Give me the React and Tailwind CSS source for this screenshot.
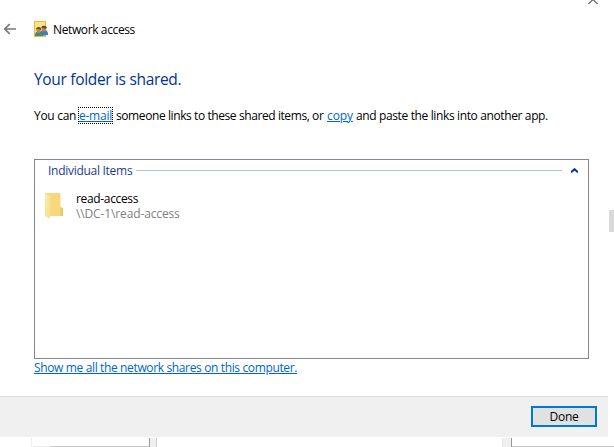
function BackArrow() {
  return (
    <svg className="ml-1 h-3 w-3" viewBox="0 0 12 12" fill="none" stroke="#777" strokeWidth="1.7">
      <path d="M0.8 6H12M5.8 1L0.8 6L5.8 11" />
    </svg>
  );
}

function SharedFolderIcon() {
  return (
    <svg className="ml-[18px] h-4 w-[14px]" viewBox="0 0 14 16">
      <path d="M0 0H12V16H0Z" fill="#e9bd45" />
      <path d="M1 1H11V15H1Z" fill="#ffe37d" />
      <path d="M6 15V12Q7 9 10 9Q14 9 14 13V14Z" fill="#3c7fb5" />
      <path d="M7.5 6.5Q10 4 12.5 6.5L12 9.5L10 11L8 9.5Z" fill="#b98250" />
      <path d="M7.3 7Q7.5 4.8 10 4.8Q12.8 4.8 12.7 7.5L9 6.7Z" fill="#4b4435" />
      <path d="M1 15V14Q1 10.5 4.5 10.5Q8.5 10.5 9 15Z" fill="#438878" />
      <path d="M2.3 8Q4.5 5 7 8L6.5 11L4.5 12.3L2.8 11Z" fill="#bd8759" />
      <path d="M2 8.5Q2 6 4.7 6Q7.5 6 7.2 9L4 7.8Z" fill="#5e5038" />
    </svg>
  );
}

function FolderIcon() {
  return (
    <svg className="h-7 w-5" viewBox="0 0 20 28">
      <defs>
        <linearGradient id="flap" x1="0" y1="0" x2="1" y2="1">
          <stop offset="0" stopColor="#ffebad" />
          <stop offset="1" stopColor="#fbdc86" />
        </linearGradient>
      </defs>
      <path d="M1 2H16.5V16L19 17.5V25H5L1 21Z" fill="#f7d87c" />
      <path d="M16.5 16L19 17.5V25H16.5Z" fill="#f2c75f" />
      <path d="M1 2L6.5 5.5V22L5.5 28L1 24.5Z" fill="url(#flap)" />
    </svg>
  );
}

export default function App() {
  return (
    <div className="relative flex h-[447px] w-[614px] flex-col overflow-hidden bg-white font-['Open_Sans','Noto_Sans',sans-serif] text-[12px] leading-4 whitespace-nowrap text-black">
      <header className="flex h-[58px] items-center">
        <BackArrow />
        <SharedFolderIcon />
        <span className="ml-[5px] pt-0.5 tracking-[-0.38px]">Network access</span>
      </header>

      <main className="flex h-[338px] w-[589px] flex-col pl-[34px]">
        <h1 className="mt-[9px] h-6 text-[15.5px] leading-6 tracking-[-0.32px] text-[#003399]">Your folder is shared.</h1>
        <p className="mt-[17px] flex h-4 tracking-[-0.37px]">
          <span className="w-[45px] tracking-[-0.3px]">You can</span>
          <a className="h-[15px] w-[33px] tracking-[-0.25px] text-[#0066cc] underline outline-1 outline-dotted outline-black">e-mail</a>
          <span className="ml-1 w-[211px] tracking-[-0.41px]">someone links to these shared items, or</span>
          <a className="w-[26px] tracking-[-0.1px] text-[#0066cc] underline">copy</a>
          <span className="ml-[3px]">and paste the links into another app.</span>
        </p>
        <section className="mt-[35px] h-[200px] w-[555px] border border-[#828790]">
          <div className="mt-[3px] flex h-4 items-center pl-[13px] text-[#1f3a93]">
            <span className="w-[84px] tracking-[-0.28px]">Individual Items</span>
            <div className="mb-0.5 ml-1 h-px w-[426px] bg-[#b0c4e4]" />
            <svg className="mb-px ml-[9px] h-[5px] w-[7px]" viewBox="0 0 7 5" fill="none" stroke="#003399" strokeWidth="2">
              <path d="M0 4.3L3.5 1.2L7 4.3" />
            </svg>
          </div>
          <div className="mt-3 flex pl-[9px]">
            <FolderIcon />
            <div className="ml-3 leading-[15px]">
              <div className="tracking-[-0.34px]">read-access</div>
              <div className="tracking-[-0.13px] text-[#808080]">\\DC-1\read-access</div>
            </div>
          </div>
        </section>
        <a className="mt-px h-4 w-[263px] tracking-[-0.36px] text-[#0066cc] underline">Show me all the network shares on this computer.</a>
      </main>

      <footer className="flex h-[41px] w-[608px] justify-end border-t border-[#dfdfdf] bg-[#f0f0f0] pt-[9px] pr-[11px]">
        <button className="flex h-[21px] w-[66px] items-center justify-center border-2 border-[#0078d7] bg-[#e1e1e1] tracking-[-0.2px]">Done</button>
      </footer>

      <div className="flex h-[10px] pt-px">
        <div className="ml-[31px] w-[2px] border-l border-[#eee]" />
        <div className="w-[17px] border-b border-[#eee]" />
        <div className="w-[99px] border-b border-[#c8c8c8]" />
        <div className="w-2 border-x border-l-[#999] border-r-[#ccc] bg-[#f0f0f0]" />
        <div className="ml-[345px] w-[10px] border-x border-l-[#e5e5e5] border-r-[#999] bg-[#f0f0f0]" />
        <div className="w-[102px] border-b border-[#c8c8c8]" />
      </div>

      <div className="absolute top-[210px] left-[609px] h-[22px] w-[5px] bg-[#d9d9d9]" />
      <svg className="absolute top-0 left-[588px] h-1 w-[10px]" viewBox="0 0 10 4" fill="none" stroke="#000">
        <path d="M0.5 4L4.5 0M5.5 0L9.5 4" />
      </svg>
    </div>
  );
}
